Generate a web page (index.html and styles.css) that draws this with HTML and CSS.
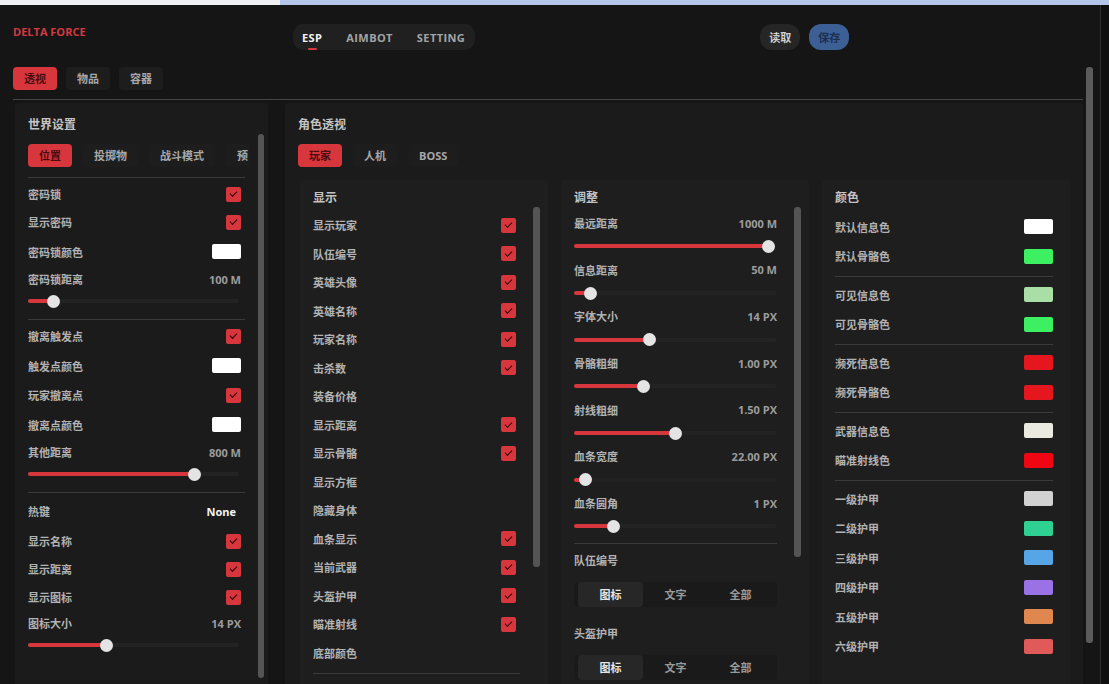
FILE: index.html
```html
<!DOCTYPE html>
<html lang="zh">
<head>
<meta charset="utf-8">
<title>DELTA FORCE</title>
<link rel="stylesheet" href="styles.css">
</head>
<body>
<div class="chrome"><div class="chrome-tab"></div><div class="chrome-rest"></div></div>
<div class="window">
  <header class="header">
    <div class="logo">DELTA FORCE</div>
    <nav class="topnav">
      <span class="tn active">ESP</span>
      <span class="tn">AIMBOT</span>
      <span class="tn">SETTING</span>
    </nav>
    <div class="actions">
      <button class="btn read">读取</button>
      <button class="btn save">保存</button>
    </div>
  </header>

  <div class="main">
    <div class="content">
      <div class="tabs">
        <span class="tab active">透视</span>
        <span class="tab">物品</span>
        <span class="tab">容器</span>
      </div>
      <div class="hr"></div>

      <div class="panels">
        <section class="panel left">
          <div class="ptitle">世界设置</div>
          <div class="lbody">
            <div class="lscroll">
              <div class="subtabs">
                <span class="tab active">位置</span>
                <span class="tab">投掷物</span>
                <span class="tab">战斗模式</span>
                <span class="tab">预</span>
              </div>
              <div class="div first"></div>
              <div class="row"><span>密码锁</span><span class="chk"></span></div>
              <div class="row"><span>显示密码</span><span class="chk"></span></div>
              <div class="row c"><span>密码锁颜色</span><span class="sw white"></span></div>
              <div class="slabel"><span>密码锁距离</span><span class="val">100 M</span></div>
              <div class="slider"><div class="track"><div class="fill" style="width:12.3%"></div></div></div>
              <div class="div"></div>
              <div class="row"><span>撤离触发点</span><span class="chk"></span></div>
              <div class="row c"><span>触发点颜色</span><span class="sw white"></span></div>
              <div class="row"><span>玩家撤离点</span><span class="chk"></span></div>
              <div class="row c"><span>撤离点颜色</span><span class="sw white"></span></div>
              <div class="slabel"><span>其他距离</span><span class="val">800 M</span></div>
              <div class="slider"><div class="track"><div class="fill" style="width:78.7%"></div></div></div>
              <div class="div"></div>
              <div class="row hk"><span>热键</span><span class="none">None</span></div>
              <div class="row"><span>显示名称</span><span class="chk"></span></div>
              <div class="row"><span>显示距离</span><span class="chk"></span></div>
              <div class="row"><span>显示图标</span><span class="chk"></span></div>
              <div class="slabel"><span>图标大小</span><span class="val">14 PX</span></div>
              <div class="slider"><div class="track"><div class="fill" style="width:37%"></div></div></div>
            </div>
            <div class="vbar lbar"></div>
          </div>
        </section>

        <section class="panel mid">
          <div class="ptitle">角色透视</div>
          <div class="ptabs">
            <span class="tab active">玩家</span>
            <span class="tab">人机</span>
            <span class="tab">BOSS</span>
          </div>
          <div class="cols">
            <div class="sub c1">
              <div class="ptitle">显示</div>
              <div class="cbody">
                <div class="cscroll">
                  <div class="row"><span>显示玩家</span><span class="chk"></span></div>
                  <div class="row"><span>队伍编号</span><span class="chk"></span></div>
                  <div class="row"><span>英雄头像</span><span class="chk"></span></div>
                  <div class="row"><span>英雄名称</span><span class="chk"></span></div>
                  <div class="row"><span>玩家名称</span><span class="chk"></span></div>
                  <div class="row"><span>击杀数</span><span class="chk"></span></div>
                  <div class="row"><span>装备价格</span></div>
                  <div class="row"><span>显示距离</span><span class="chk"></span></div>
                  <div class="row"><span>显示骨骼</span><span class="chk"></span></div>
                  <div class="row"><span>显示方框</span></div>
                  <div class="row"><span>隐藏身体</span></div>
                  <div class="row"><span>血条显示</span><span class="chk"></span></div>
                  <div class="row"><span>当前武器</span><span class="chk"></span></div>
                  <div class="row"><span>头盔护甲</span><span class="chk"></span></div>
                  <div class="row"><span>瞄准射线</span><span class="chk"></span></div>
                  <div class="row"><span>底部颜色</span></div>
                  <div class="div endline"></div>
                </div>
                <div class="vbar bar1"></div>
              </div>
            </div>

            <div class="sub c2">
              <div class="ptitle">调整</div>
              <div class="cbody">
                <div class="cscroll">
                  <div class="slabel"><span>最远距离</span><span class="val">1000 M</span></div>
                  <div class="slider"><div class="track"><div class="fill" style="width:96%"></div></div></div>
                  <div class="slabel"><span>信息距离</span><span class="val">50 M</span></div>
                  <div class="slider"><div class="track"><div class="fill" style="width:8%"></div></div></div>
                  <div class="slabel"><span>字体大小</span><span class="val">14 PX</span></div>
                  <div class="slider"><div class="track"><div class="fill" style="width:37%"></div></div></div>
                  <div class="slabel"><span>骨骼粗细</span><span class="val">1.00 PX</span></div>
                  <div class="slider"><div class="track"><div class="fill" style="width:34%"></div></div></div>
                  <div class="slabel"><span>射线粗细</span><span class="val">1.50 PX</span></div>
                  <div class="slider"><div class="track"><div class="fill" style="width:49.8%"></div></div></div>
                  <div class="slabel"><span>血条宽度</span><span class="val">22.00 PX</span></div>
                  <div class="slider"><div class="track"><div class="fill" style="width:5.6%"></div></div></div>
                  <div class="slabel"><span>血条圆角</span><span class="val">1 PX</span></div>
                  <div class="slider"><div class="track"><div class="fill" style="width:19.4%"></div></div></div>
                  <div class="div sep2"></div>
                  <div class="slabel"><span>队伍编号</span></div>
                  <div class="seg"><span class="on">图标</span><span>文字</span><span>全部</span></div>
                  <div class="slabel gap"><span>头盔护甲</span></div>
                  <div class="seg"><span class="on">图标</span><span>文字</span><span>全部</span></div>
                </div>
                <div class="vbar bar2"></div>
              </div>
            </div>

            <div class="sub c3">
              <div class="ptitle">颜色</div>
              <div class="cscroll">
                <div class="row"><span>默认信息色</span><span class="sw white"></span></div>
                <div class="row"><span>默认骨骼色</span><span class="sw green"></span></div>
                <div class="div"></div>
                <div class="row"><span>可见信息色</span><span class="sw lgreen"></span></div>
                <div class="row"><span>可见骨骼色</span><span class="sw green"></span></div>
                <div class="div"></div>
                <div class="row"><span>濒死信息色</span><span class="sw red"></span></div>
                <div class="row"><span>濒死骨骼色</span><span class="sw red"></span></div>
                <div class="div"></div>
                <div class="row"><span>武器信息色</span><span class="sw ivory"></span></div>
                <div class="row"><span>瞄准射线色</span><span class="sw red2"></span></div>
                <div class="div"></div>
                <div class="row"><span>一级护甲</span><span class="sw a1"></span></div>
                <div class="row"><span>二级护甲</span><span class="sw a2"></span></div>
                <div class="row"><span>三级护甲</span><span class="sw a3"></span></div>
                <div class="row"><span>四级护甲</span><span class="sw a4"></span></div>
                <div class="row"><span>五级护甲</span><span class="sw a5"></span></div>
                <div class="row"><span>六级护甲</span><span class="sw a6"></span></div>
              </div>
            </div>
          </div>
        </section>
      </div>
    </div>
    <div class="mainscroll"></div>
  </div>
</div>
</body>
</html>
```

FILE: styles.css
```css
* { box-sizing: border-box; margin: 0; padding: 0; }

body {
  width: 1109px;
  height: 684px;
  overflow: hidden;
  background: #0f0f10;
  font-family: "Open Sans", "Noto Sans CJK SC", sans-serif;
  font-size: 11px;
  color: #b2b2b2;
}

.chrome { display: flex; height: 5px; }
.chrome-tab { width: 280px; background: #eef0f4; }
.chrome-rest { flex: 1; background: #b3c5e9; }

.window {
  width: 1101px;
  height: 679px;
  background: #151516;
  border-right: 1px solid #2e2e2f;
  overflow: hidden;
}

/* header */
.header { display: flex; align-items: flex-start; height: 55px; padding-left: 13px; }
.logo {
  width: 280px;
  margin-top: 21px;
  line-height: 12px;
  font-size: 11px;
  font-weight: 700;
  color: #d23a40;
}
.topnav {
  margin-top: 19px;
  height: 26px;
  display: flex;
  align-items: center;
  gap: 24px;
  padding: 0 10px 0 9px;
  background: #202021;
  border-radius: 10px;
}
.tn {
  position: relative;
  font-weight: 700;
  font-size: 11px;
  line-height: 15px;
  color: #a4a4a4;
  letter-spacing: 0.4px;
}
.tn.active { color: #f2f2f2; }
.tn.active::after {
  content: "";
  position: absolute;
  left: 50%;
  margin-left: -4.5px;
  bottom: -5px;
  width: 9px;
  height: 2px;
  background: #d23a40;
  border-radius: 1px;
}
.actions { margin-left: 285px; margin-top: 19px; display: flex; gap: 9px; }
.btn {
  height: 26px;
  padding: 0 9px;
  border: none;
  border-radius: 12px;
  font-family: inherit;
  font-size: 11px;
  font-weight: 700;
}
.btn.read { background: #262627; color: #cfcfcf; }
.btn.save { background: #3c5f95; color: #1c2f52; }

/* main */
.main { display: flex; padding: 7px 0 0 13px; }
.content { width: 1070px; }
.mainscroll {
  width: 7px;
  height: 576px;
  margin-left: 3px;
  background: #5b5b5c;
  border-radius: 3px;
}

.tabs, .subtabs, .ptabs { display: flex; height: 23px; }
.tabs { gap: 9px; }
.tab {
  flex-shrink: 0;
  padding: 0 11px;
  line-height: 23px;
  border-radius: 4px;
  background: #1d1d1e;
  color: #a8a8a8;
  font-weight: 700;
  white-space: nowrap;
}
.tab.active { background: #d8363d; color: #4a0c0e; }

.hr { height: 1px; background: #454546; margin-top: 9px; }

.panels { display: flex; margin-top: 3px; height: 600px; }
.panel { background: #1b1b1c; border-radius: 4px; }
.left { margin-left: 2px; width: 253px; padding: 14px 0 0 13px; }
.mid { margin-left: 17px; width: 798px; padding: 14px 13px 0 13px; }

.ptitle { font-size: 12px; line-height: 16px; font-weight: 700; color: #c4c4c4; }

/* left panel */
.lbody { display: flex; margin-top: 1px; }
.lscroll { width: 217px; }
.lscroll .row, .lscroll .slabel { padding-right: 4px; }
.subtabs { gap: 11px; margin-top: 10px; width: 222px; overflow: hidden; }

.vbar { width: 6px; background: #545455; border-radius: 3px; }
.lbar { margin-left: 13px; height: 544px; }

/* rows */
.row {
  display: flex;
  justify-content: space-between;
  align-items: center;
  height: 28px;
  font-weight: 700;
}
.row.c { height: 31px; }
.row.hk { height: 32px; }
.slabel {
  display: flex;
  justify-content: space-between;
  align-items: center;
  height: 24px;
  font-weight: 700;
}
.slider { height: 20px; display: flex; align-items: center; }
.track {
  width: 211px;
  height: 4px;
  background: #232324;
  border-radius: 2px;
  display: flex;
}
.fill { position: relative; background: #d8363d; border-radius: 2px; }
.fill::after {
  content: "";
  position: absolute;
  right: -6.5px;
  top: -4.5px;
  width: 13px;
  height: 13px;
  border-radius: 50%;
  background: #e4e4e4;
}
.val { font-weight: 700; color: #9c9c9c; }
.none { font-weight: 700; color: #f4f4f4; margin-right: 5px; }

.chk {
  width: 15px;
  height: 15px;
  background: #d8363d;
  border-radius: 2px;
  display: flex;
  align-items: center;
  justify-content: center;
}
.chk::after {
  content: "";
  width: 6px;
  height: 3px;
  margin-top: -2px;
  border-left: 1.6px solid #2b0405;
  border-bottom: 1.6px solid #2b0405;
  transform: rotate(-45deg);
}

.sw { width: 29px; height: 15px; border-radius: 2px; }
.white { background: #ffffff; }
.green { background: #3cf061; }
.lgreen { background: #a9dfa6; }
.red { background: #e6161f; }
.ivory { background: #ebeae0; }
.red2 { background: #f00512; }
.a1 { background: #d2d2d2; }
.a2 { background: #2ed191; }
.a3 { background: #56a5e6; }
.a4 { background: #9b72e6; }
.a5 { background: #df874e; }
.a6 { background: #e05a5a; }

.div { height: 1px; background: #3a3a3b; margin: 8px 0 2px; }
.div.first { margin-top: 10px; }

/* middle panel */
.ptabs { gap: 11px; margin-top: 11px; }
.cols {
  display: grid;
  grid-template-columns: repeat(3, 248px);
  gap: 13px;
  margin: 13px 0 0 2px;
}
.sub {
  background: #1e1e1f;
  border-radius: 4px;
  padding: 10px 0 0 13px;
  height: 520px;
}
.cbody { display: flex; }
.cscroll { width: 203px; margin-top: 5px; }
.c1 .row { height: 28.5px; }
.c1 .endline { width: 207px; margin: 6px 0 0; }
.cbody .vbar { width: 7px; margin-left: 17px; margin-top: 1px; }
.bar1 { height: 360px; }
.bar2 { height: 350px; }

.c2 .slider { height: 22.7px; }
.c2 .track { width: 203px; }
.c2 .sep2 { margin: 5px 0 4px; }
.c2 .gap { margin-top: 14px; }
.seg {
  display: flex;
  height: 25px;
  margin-top: 10px;
  padding: 0 4px;
  background: #1a1a1b;
  border-radius: 4px;
}
.seg span {
  flex: 1;
  display: flex;
  align-items: center;
  justify-content: center;
  font-weight: 700;
  color: #9a9a9a;
  border-radius: 4px;
}
.seg span.on { background: #272728; color: #e6e6e6; }

.c3 .cscroll { width: 218px; margin-top: 6px; }
.c3 .row { height: 29.5px; }
.c3 .div { margin: 5px 0 3px; }
```
